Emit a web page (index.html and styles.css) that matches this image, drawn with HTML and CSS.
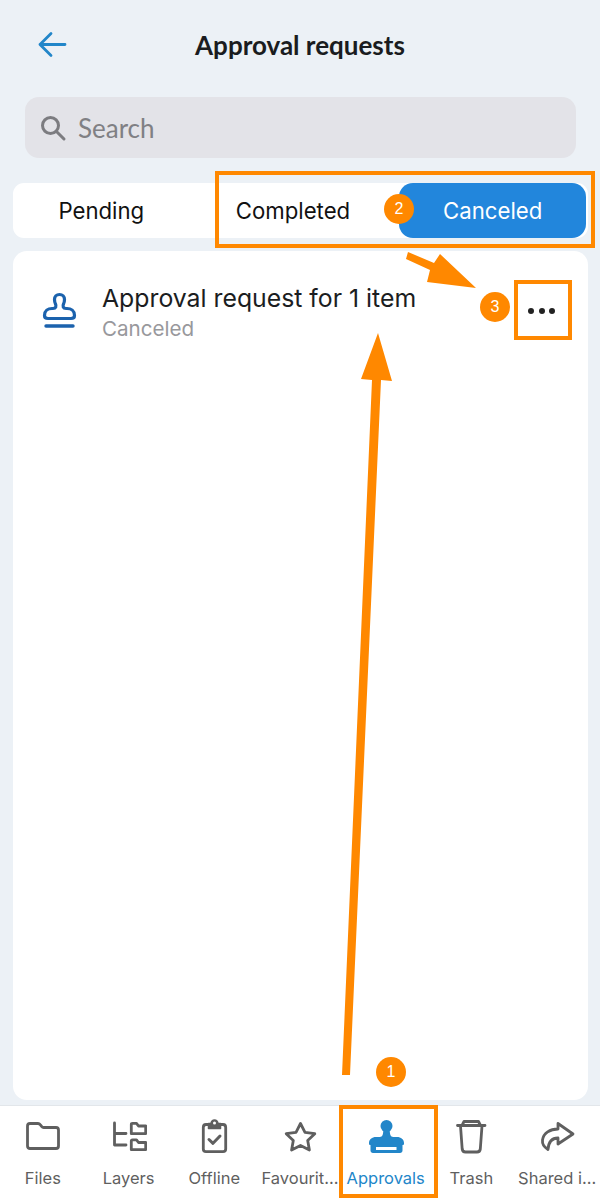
FILE: index.html
```html
<!DOCTYPE html>
<html lang="en">
<head>
<meta charset="utf-8">
<title>Approval requests</title>
<link rel="stylesheet" href="styles.css">
</head>
<body>
<div class="screen">
  <header class="header">
    <svg class="back" width="30" height="30" viewBox="0 0 30 30" fill="none" stroke="#2286c9" stroke-width="2.800" stroke-linecap="round" stroke-linejoin="round"><path d="M3 14.500H28M14 3.500 3 14.500 14 25.500"/></svg>
    <h1 class="title">Approval requests</h1>
  </header>
  <div class="search">
    <svg width="28" height="28" viewBox="0 0 28 28" fill="none" stroke="#7c7c80" stroke-width="3" stroke-linecap="round"><circle cx="11.500" cy="11.500" r="8"/><path d="M17.500 17.500 25 25"/></svg>
    <span class="search-text">Search</span>
  </div>
  <nav class="tabs">
    <div class="tab tab-offset">Pending</div>
    <div class="tab tab-offset">Completed</div>
    <div class="tab tab-active">Canceled</div>
  </nav>
  <main class="list">
    <div class="row">
      <svg class="row-icon" width="38" height="38" viewBox="0 0 38 38" fill="none" stroke="#1b62ad" stroke-width="3.200" stroke-linecap="round" stroke-linejoin="round"><path d="M9 26.500H32C34.500 26.500 35.500 25.500 35.500 23.500 35.500 19 32 16.500 28 16.500H27C24 16.500 23.500 14 24.500 12 25 11 25.500 9.500 25.500 7.500 25.500 4.500 23.500 2.500 20.500 2.500 17.500 2.500 15.500 4.500 15.500 7.500 15.500 9.500 16 11 16.500 12 17.500 14 17 16.500 14 16.500H13C9 16.500 5.500 19 5.500 23.500 5.500 25.500 6.500 26.500 9 26.500Z"/><path d="M7 34H34" stroke-width="3.400"/></svg>
      <div class="row-text">
        <div class="row-title">Approval request for 1 item</div>
        <div class="row-sub">Canceled</div>
      </div>
      <div class="more"><i></i><i></i><i></i></div>
    </div>
  </main>
  <footer class="tabbar">
    <div class="bar-item">
      <svg width="36" height="36" viewBox="0 0 36 36" fill="none" stroke="#5f5f5f" stroke-width="2.800" stroke-linejoin="round"><path d="M2.500 8C2.500 6.300 3.500 5.500 5 5.500H13C14 5.500 14.600 5.900 15.200 6.700L16.800 8.700C17.300 9.300 17.800 9.500 18.600 9.500H31C32.600 9.500 33.500 10.500 33.500 12V28C33.500 29.700 32.500 30.500 31 30.500H5C3.500 30.500 2.500 29.700 2.500 28Z"/></svg>
      <span>Files</span>
    </div>
    <div class="bar-item">
      <svg width="36" height="36" viewBox="0 0 36 36" fill="none" stroke="#5f5f5f" stroke-width="2.800" stroke-linejoin="round" stroke-linecap="round"><path d="M3.500 5V27H15M3.500 15.500H15"/><path d="M20.300 15.700V6.500C20.300 5.700 20.700 5.300 21.500 5.300H25.500L27.500 8H34.700V15.700Z"/><path d="M20.300 31.700V23C20.300 22.200 20.700 21.800 21.500 21.800H25.500L27.500 24.500H34.700V31.700Z"/></svg>
      <span>Layers</span>
    </div>
    <div class="bar-item">
      <svg width="36" height="36" viewBox="0 0 36 36" fill="none" stroke="#5f5f5f" stroke-width="2.800" stroke-linejoin="round" stroke-linecap="round"><path d="M12 6.500H10C8 6.500 7.300 7.500 7.300 9.500V31C7.300 33 8 33.700 10 33.700H27C29 33.700 29.700 33 29.700 31V9.500C29.700 7.500 29 6.500 27 6.500H25"/><path d="M12.500 10.500H24.500V5.500H22A3.500 3.500 0 0 0 15 5.500H12.500Z" fill="#5f5f5f" stroke-width="1.500"/><circle cx="18.500" cy="5" r="1.500" fill="#fff" stroke="none"/><path d="M13 21.500 17 25.300 24 18" stroke-width="3"/></svg>
      <span>Offline</span>
    </div>
    <div class="bar-item">
      <svg width="36" height="36" viewBox="0 0 36 36" fill="none" stroke="#5f5f5f" stroke-width="2.800" stroke-linejoin="round"><path d="M18.500 5.500 23 14.300 32.800 15.700 25.700 22.500 27.400 32 18.500 27.500 9.600 32 11.300 22.500 4.200 15.700 14 14.300Z"/></svg>
      <span>Favourit...</span>
    </div>
    <div class="bar-item bar-active">
      <svg width="36" height="36" viewBox="0 0 36 36" fill="#2286c9"><circle cx="18.500" cy="8" r="6"/><path d="M15.500 11H21.500L22 15.500C22.300 18 23.500 19 25.500 19H29C33 19 36 21.500 36 25V25.500C36 26.500 35.500 27 34.500 27V32.500C34.500 34 33.500 35 32 35H5C3.500 35 2.500 34 2.500 32.500V27C1.500 27 1 26.500 1 25.500V25C1 21.500 4 19 8 19H11.500C13.500 19 14.700 18 15 15.500Z"/><rect x="8" y="29" width="20.500" height="3" fill="#fff"/></svg>
      <span>Approvals</span>
    </div>
    <div class="bar-item">
      <svg width="36" height="36" viewBox="0 0 36 36" fill="none" stroke="#5f5f5f" stroke-width="2.800" stroke-linecap="round" stroke-linejoin="round"><path d="M4.500 7.500H32M9 7.500 11 3.500H25.500L27.500 7.500M7.500 8 9.200 31C9.400 33 10.500 34 12.500 34H24C26 34 27.100 33 27.300 31L29 8"/></svg>
      <span>Trash</span>
    </div>
    <div class="bar-item">
      <svg width="36" height="36" viewBox="0 0 36 36" fill="none" stroke="#5f5f5f" stroke-width="2.800" stroke-linecap="round" stroke-linejoin="round"><path d="M19 5.500 34 16 19 26V20C13 20 9.500 24 9 31.500 5 29 3 26 3.500 22 4.500 15 11 11 19 11Z"/></svg>
      <span>Shared i...</span>
    </div>
  </footer>

  <svg class="marks" width="600" height="1201" viewBox="0 0 600 1201" fill="none" stroke="#ff8800" stroke-width="4">
    <rect x="217" y="173" width="376" height="73"/>
    <rect x="516" y="282" width="54" height="56"/>
    <rect x="341" y="1107" width="95" height="89"/>
    <path fill="#ff8800" stroke="none" d="M342 1075 350 1075 381 380 392 381 378 333 361 379 372 380Z"/>
    <path fill="#ff8800" stroke="none" d="M408 252 406 259 430 270 427 282 476 288 440 254 434 263Z"/>
  </svg>
  <div class="badge badge-1">1</div>
  <div class="badge badge-2">2</div>
  <div class="badge badge-3">3</div>
</div>
</body>
</html>
```
FILE: styles.css
```css
* { box-sizing: border-box; }
html, body { margin: 0; padding: 0; }
body { font-family: Inter, "Liberation Sans", sans-serif; background: #ecf1f6; }
.screen { position: relative; width: 600px; height: 1201px; display: flex; flex-direction: column; overflow: hidden; background: #ecf1f6; }
.header { height: 97px; flex: none; display: flex; align-items: flex-start; padding: 30px 0 0 37px; }
.back { flex: none; }
.title { position: absolute; left: 0; right: 0; top: 30px; margin: 0; text-align: center; font: 700 26px/30px Lato, sans-serif; color: #1a1c20; }
.search { height: 61px; margin: 0 24px 0 25px; flex: none; display: flex; align-items: center; gap: 11px; padding-left: 14px; border-radius: 14px; background: #e3e3e8; }
.search-text { font: 400 26px/32px Lato, sans-serif; color: #808084; }
.tabs { margin: 25px 12px 0 13px; height: 55px; flex: none; display: grid; grid-template-columns: repeat(3, 1fr); background: #fff; border-radius: 11px; }
.tab { display: flex; align-items: center; justify-content: center; font-size: 22.200px; color: #111; }
.tab-offset { padding-right: 15px; }
.tab-active { margin: 0 2px 0 3px; background: #2286dc; color: #fff; border-radius: 14px; }
.list { margin: 13px 12px 0 13px; height: 849px; flex: none; background: #fff; border-radius: 14px; }
.row { display: flex; align-items: flex-start; padding: 30px 0 0 26px; }
.row-icon { flex: none; margin-top: 11px; }
.row-text { margin-left: 25px; width: 360px; flex: none; }
.row-title { font-size: 24.800px; line-height: 34px; color: #1b1d21; }
.row-sub { font-size: 20.600px; line-height: 27px; color: #98989c; }
.more { margin-left: 66px; margin-top: 27px; display: flex; gap: 4.500px; flex: none; }
.more i { display: block; width: 6px; height: 6px; border-radius: 50%; background: #222; }
.tabbar { margin-top: 5px; flex: 1; display: grid; grid-template-columns: repeat(7, 1fr); background: #fff; border-top: 1px solid #e2e6ea; padding: 0; }
.bar-item { display: flex; flex-direction: column; align-items: center; padding-top: 12px; font-size: 16.500px; line-height: 22px; color: #5f5f5f; white-space: nowrap; }
.bar-item span { margin-top: 13px; }
.bar-active { color: #2286c9; }
.marks { position: absolute; left: 0; top: 0; pointer-events: none; }
.badge { position: absolute; display: flex; align-items: center; justify-content: center; width: 30px; height: 30px; border-radius: 50%; background: #ff8800; color: #fff; font: 16px/1 "Liberation Sans", sans-serif; }
.badge-1 { left: 376px; top: 1057px; }
.badge-2 { left: 384px; top: 194px; }
.badge-3 { left: 480px; top: 292px; }
```
